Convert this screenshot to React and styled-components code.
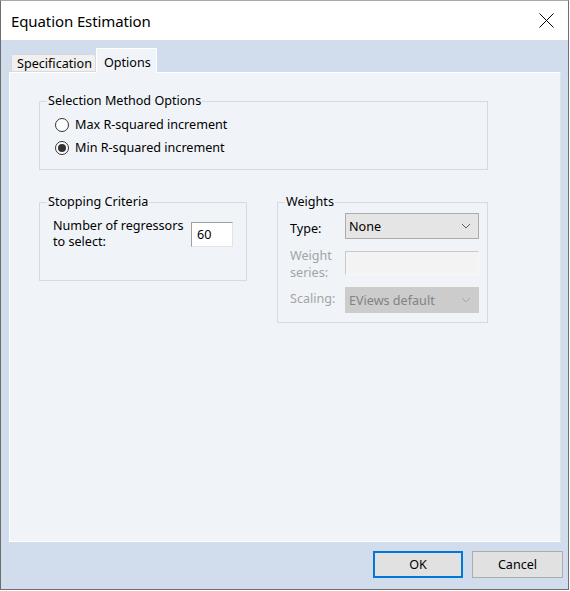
import React from "react";
import styled, { createGlobalStyle } from "styled-components";

const GlobalStyle = createGlobalStyle`
  html, body { margin: 0; padding: 0; background: #ffffff; }
  body { font-family: "Noto Sans", "Open Sans", Arial, sans-serif; font-size: 12.6px; color: #000; }
  * { box-sizing: border-box; }
`;

const Window = styled.div`
  width: 569px;
  height: 590px;
  display: flex;
  flex-direction: column;
  border: 1px solid #6e6e6e;
  border-top-color: #a9a9a9;
  background: #d1dcec;
`;

const TitleBar = styled.div`
  height: 39px;
  flex: none;
  background: #ffffff;
  display: flex;
  align-items: center;
  justify-content: space-between;
  padding: 0 14px 0 10px;
`;

const Title = styled.div`
  font-size: 15px;
  color: #000;
  letter-spacing: -0.1px;
`;

const CloseButton = styled.div`
  width: 16px;
  height: 16px;
  display: flex;
  align-items: center;
  justify-content: center;
`;

const Body = styled.div`
  flex: 1;
  display: flex;
  flex-direction: column;
  padding: 8px 5px 0 8px;
`;

const TabStrip = styled.div`
  display: flex;
  align-items: flex-end;
  height: 24px;
  padding-left: 2px;
  position: relative;
  z-index: 1;
`;

const Tab = styled.div`
  height: ${(p) => (p.$active ? "25px" : "18px")};
  margin-bottom: ${(p) => (p.$active ? "-1px" : "0")};
  padding: ${(p) => (p.$active ? "2px 5px 0 7px" : "0 3px 0 5px")};
  display: flex;
  align-items: center;
  background: ${(p) => (p.$active ? "#f0f4f9" : "#f0f0f0")};
  border: 1px solid ${(p) => (p.$active ? "#ffffff" : "#d9d9d9")};
  border-bottom: ${(p) => (p.$active ? "none" : "1px solid #d9d9d9")};
  white-space: nowrap;
`;

const Panel = styled.div`
  flex: 1;
  margin-right: 2px;
  background: #f0f4f9;
  border: 1px solid #ffffff;
  border-right-color: #dde2e8;
  padding: 20px 0 0 29px;
  display: flex;
  flex-direction: column;
`;

const Group = styled.fieldset`
  margin: 0;
  width: ${(p) => p.$w}px;
  height: ${(p) => p.$h}px;
  border: 1px solid #d7dbe0;
  padding: 0;
  min-inline-size: 0;
`;

const GroupBody = styled.div`
  padding: ${(p) => p.$pad};
`;

const Legend = styled.legend`
  padding: 0 1px;
  margin-left: 7px;
  line-height: 16px;
`;

const RadioRow = styled.label`
  height: 23px;
  display: flex;
  align-items: center;
  gap: 6px;
`;

const RadioCircle = styled.span`
  width: 14px;
  height: 14px;
  border-radius: 50%;
  border: 1px solid #333333;
  background: #ffffff;
  display: flex;
  align-items: center;
  justify-content: center;
  &::after {
    content: "";
    width: 8px;
    height: 8px;
    border-radius: 50%;
    background: ${(p) => (p.$checked ? "#333333" : "transparent")};
  }
`;

const Row = styled.div`
  display: flex;
  gap: 30px;
  margin-top: 24px;
  align-items: flex-start;
`;

const StopRow = styled.div`
  display: flex;
  justify-content: space-between;
  align-items: flex-start;
`;

const StopLabel = styled.div`
  line-height: 16px;
`;

const TextBox = styled.div`
  width: ${(p) => p.$w}px;
  height: ${(p) => p.$h}px;
  margin-top: ${(p) => p.$mt || 0}px;
  background: ${(p) => (p.$disabled ? "#f3f3f3" : "#ffffff")};
  border-top: 1px solid ${(p) => (p.$disabled ? "#c9c9c9" : "#a0a0a0")};
  border-left: 1px solid ${(p) => (p.$disabled ? "#c9c9c9" : "#a0a0a0")};
  border-right: 1px solid ${(p) => (p.$disabled ? "#f7f7f7" : "#e3e3e3")};
  border-bottom: 1px solid ${(p) => (p.$disabled ? "#f7f7f7" : "#e3e3e3")};
  padding-left: 5px;
  display: flex;
  align-items: center;
`;

const FormGrid = styled.div`
  display: grid;
  grid-template-columns: 55px 134px;
  grid-template-rows: 26px 24px 26px;
  row-gap: 12px;
`;

const FieldLabel = styled.div`
  line-height: ${(p) => p.$lh || 15}px;
  margin-top: ${(p) => p.$mt}px;
  color: ${(p) => (p.$disabled ? "#a3a3a3" : "#000000")};
`;

const Select = styled.div`
  height: 26px;
  display: flex;
  align-items: center;
  justify-content: space-between;
  padding: 0 7px 0 3px;
  background: ${(p) => (p.$disabled ? "#cccccc" : "#e5e5e5")};
  border: 1px solid ${(p) => (p.$disabled ? "#cccccc" : "#acacac")};
  color: ${(p) => (p.$disabled ? "#838383" : "#000000")};
`;

const Footer = styled.div`
  height: 47px;
  flex: none;
  display: flex;
  justify-content: flex-end;
  align-items: center;
  gap: 9px;
  padding-bottom: 2px;
`;

const Button = styled.div`
  width: ${(p) => (p.$default ? "90px" : "91px")};
  height: 27px;
  display: flex;
  align-items: center;
  justify-content: center;
  background: #e1e1e1;
  border: ${(p) => (p.$default ? "2px solid #0078d7" : "1px solid #adadad")};
`;

const Chevron = ({ color }) => (
  <svg width="10" height="6" viewBox="0 0 10 6">
    <path d="M1 1 L5 5 L9 1" fill="none" stroke={color} strokeWidth="1" />
  </svg>
);

export default function App() {
  return (
    <>
      <GlobalStyle />
      <Window>
        <TitleBar>
          <Title>Equation Estimation</Title>
          <CloseButton>
            <svg width="15" height="15" viewBox="0 0 15 15">
              <path d="M0.5 0.5 L14.5 14.5 M14.5 0.5 L0.5 14.5" stroke="#000" strokeWidth="1" />
            </svg>
          </CloseButton>
        </TitleBar>
        <Body>
          <TabStrip>
            <Tab>Specification</Tab>
            <Tab $active>Options</Tab>
          </TabStrip>
          <Panel>
            <Group $w={449} $h={77}>
              <Legend>Selection Method Options</Legend>
              <GroupBody $pad="4px 0 0 15px">
                <RadioRow>
                  <RadioCircle />
                  Max R-squared increment
                </RadioRow>
                <RadioRow>
                  <RadioCircle $checked />
                  Min R-squared increment
                </RadioRow>
              </GroupBody>
            </Group>
            <Row>
              <Group $w={208} $h={87}>
                <Legend>Stopping Criteria</Legend>
                <GroupBody $pad="8px 13px 0 13px">
                  <StopRow>
                    <StopLabel>
                      Number of regressors
                      <br />
                      to select:
                    </StopLabel>
                    <TextBox $w={42} $h={25} $mt={4}>60</TextBox>
                  </StopRow>
                </GroupBody>
              </Group>
              <Group $w={211} $h={129}>
                <Legend>Weights</Legend>
                <GroupBody $pad="3px 8px 0 12px">
                  <FormGrid>
                    <FieldLabel $mt={8}>Type:</FieldLabel>
                    <Select>
                      <span>None</span>
                      <Chevron color="#606060" />
                    </Select>
                    <FieldLabel $mt={-4} $lh={17} $disabled>
                      Weight
                      <br />
                      series:
                    </FieldLabel>
                    <TextBox $w={134} $h={24} $disabled />
                    <FieldLabel $mt={4} $disabled>Scaling:</FieldLabel>
                    <Select $disabled>
                      <span>EViews default</span>
                      <Chevron color="#a8a8a8" />
                    </Select>
                  </FormGrid>
                </GroupBody>
              </Group>
            </Row>
          </Panel>
          <Footer>
            <Button $default>OK</Button>
            <Button>Cancel</Button>
          </Footer>
        </Body>
      </Window>
    </>
  );
}
